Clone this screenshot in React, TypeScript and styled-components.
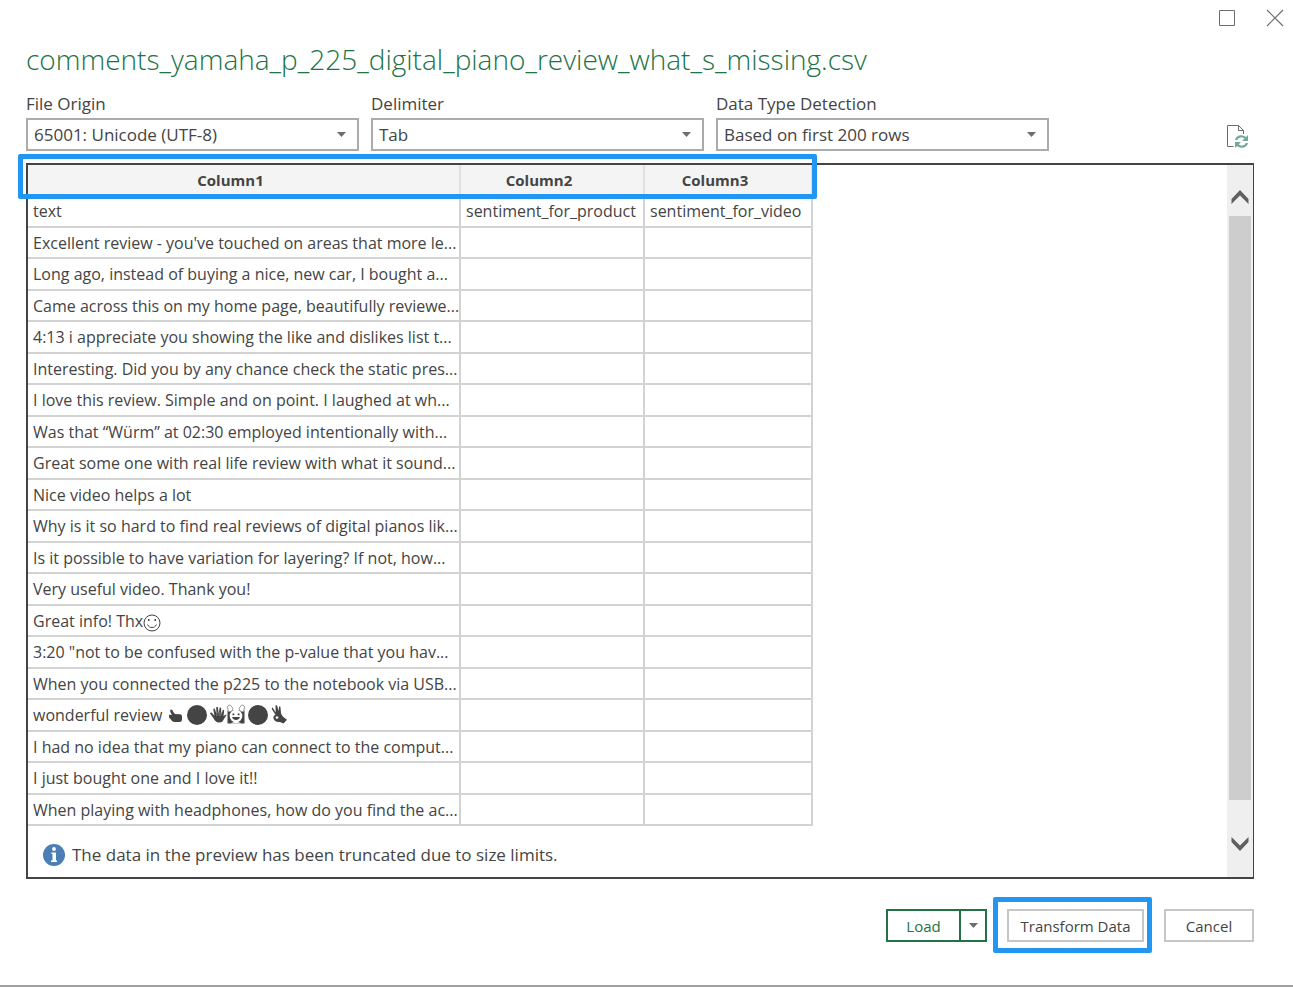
import React from "react";
import styled, { createGlobalStyle } from "styled-components";

const GlobalStyle = createGlobalStyle`
  *, *::before, *::after { box-sizing: border-box; }
  body {
    margin: 0;
    background: #fff;
    color: #444;
    font-family: "Open Sans", "Noto Sans", sans-serif;
    font-size: 17px;
  }
  button, select { font: inherit; color: inherit; }
`;

const Dialog = styled.main`
  display: flex;
  flex-direction: column;
  min-height: 100vh;
  padding: 0 39px 0 26px;
  border-bottom: 2px solid #a0a0a0;
`;

const TitleBar = styled.div`
  display: flex;
  justify-content: flex-end;
  gap: 16px;
  height: 36px;
  margin-right: -37px;
`;

const WindowButton = styled.button`
  width: 32px;
  height: 36px;
  padding: 0;
  border: 0;
  background: none;
  svg { display: block; margin: 0 auto; }
`;

const Title = styled.h1`
  margin: 0;
  color: #217346;
  font-size: 28px;
  font-weight: 300;
  line-height: 46px;
  white-space: nowrap;
`;

const Options = styled.div`
  display: flex;
  align-items: flex-end;
  gap: 12px;
  margin-top: 8px;
`;

const Field = styled.div`
  display: flex;
  flex-direction: column;
  flex: 0 1 333px;
`;

const FieldLabel = styled.label`
  line-height: 28px;
  white-space: nowrap;
`;

const SelectFrame = styled.div`
  display: grid;
  align-items: center;
  height: 33px;
  border: 2px solid #ababab;
  > * { grid-area: 1 / 1; }
  > svg { justify-self: end; margin-right: 11px; pointer-events: none; }
`;

const Select = styled.select`
  width: 100%;
  height: 29px;
  padding: 0 28px 0 6px;
  border: 0;
  background: transparent;
  appearance: none;
`;

const RefreshButton = styled.button`
  margin-left: auto;
  margin-right: 5px;
  padding: 0;
  border: 0;
  background: none;
  svg { display: block; }
`;

const Preview = styled.section`
  display: flex;
  flex: 1;
  margin-top: 12px;
  border: 2px solid #444;
  border-right-width: 1px;
`;

const PreviewBody = styled.div`
  flex: 1;
  min-width: 0;
`;

const TableArea = styled.div`
  position: relative;
  width: fit-content;
`;

const Highlight = styled.div`
  position: absolute;
  border: 5px solid #2196f3;
  border-radius: 2px;
  pointer-events: none;
`;

const HeaderHighlight = styled(Highlight)`
  top: -11px;
  left: -10px;
  right: -4px;
  height: 45px;
`;

const DataTable = styled.table`
  table-layout: fixed;
  width: 785px;
  border-collapse: separate;
  border-spacing: 0;
  font-size: 16px;
`;

const HeadCell = styled.th`
  height: 31px;
  padding: 0 26px 2px 0;
  border-right: 2px solid #e1e1e1;
  background: #f4f4f4;
  font-size: 15px;
  font-weight: 700;
  line-height: 28px;
`;

const Row = styled.tr`
  height: 31px;
  &:nth-child(odd) { height: 32px; }
`;

const Cell = styled.td`
  padding: 0 0 0 5px;
  border-right: 2px solid #d3d3d3;
  border-bottom: 2px solid #d3d3d3;
  line-height: 28px;
  white-space: nowrap;
  overflow: hidden;
`;

const Emoji = styled.svg`
  display: inline-block;
  vertical-align: -5px;
`;

const Notice = styled.p`
  display: flex;
  align-items: center;
  gap: 7px;
  margin: 0;
  padding: 13px 15px 6px;
  line-height: 32px;
`;

const ScrollBar = styled.div`
  display: flex;
  flex-direction: column;
  width: 26px;
  padding: 0 2px;
  background: #efefef;
`;

const ScrollButton = styled.button<{ $tall?: boolean }>`
  height: ${(p) => (p.$tall ? 77 : 51)}px;
  padding: ${(p) => (p.$tall ? 10 : 13)}px 0 0;
  border: 0;
  background: none;
  svg { display: block; margin: 0 auto; }
`;

const ScrollThumb = styled.div`
  flex: 1;
  background: #cdcdcd;
`;

const Footer = styled.footer`
  display: flex;
  justify-content: flex-end;
  gap: 20px;
  padding: 30px 0 43px;
  font-size: 15px;
`;

const Button = styled.button<{ $width: number }>`
  width: ${(p) => p.$width}px;
  height: 33px;
  padding: 0;
  border: 2px solid #c6c6c6;
  background: #fff;
  white-space: nowrap;
`;

const SplitButton = styled.div`
  display: flex;
  border: 2px solid #217346;
`;

const SplitPart = styled.button<{ $width: number }>`
  width: ${(p) => p.$width}px;
  height: 29px;
  padding: 0;
  border: 0;
  background: #fff;
  color: #217346;
  & + & { border-left: 2px solid #217346; }
  svg { display: block; margin: 0 auto; }
`;

const Highlighted = styled.div`
  position: relative;
`;

const ButtonHighlight = styled(Highlight)`
  inset: -12px -8px -11px -14px;
`;

const Caret = () => (
  <svg width="9" height="5" viewBox="0 0 9 5" aria-hidden="true">
    <path d="M0 0h9L4.5 5z" fill="#6d6d6d" />
  </svg>
);

const Smile = () => (
  <Emoji width="18" height="18" viewBox="0 0 18 18" role="img" aria-label="smiling face">
    <circle cx="9" cy="9" r="8" fill="none" stroke="#444" strokeWidth="1" />
    <path d="M4.5 10.5c1.5 4 7.500 4 9 0" fill="none" stroke="#444" strokeWidth="1" />
    <path d="M5 5h1.500v2H5zM11.500 5H13v2h-1.500z" fill="#444" />
  </Emoji>
);

const Reactions = () => (
  <Emoji width="122" height="22" viewBox="0 0 122 22" role="img" aria-label="thumbs up, waving hand, cheering person and OK hand">
    <g fill="#444">
      <path d="M4 5.500c1.300 0 1.700 1.200 2.300 2.400L8 10l5 .3c1.500.3 2 1.200 2 2.400v2.800c0 1.600-.8 2.500-2.300 2.500H7.500c-1.500 0-2.300-.6-3-1.700L2 13.500v-2.700l2.700.2L3.300 7.500C3 6.500 3 5.500 4 5.500z" />
      <circle cx="30" cy="11" r="10" />
      <path d="M44.500 8.500l3 3.200-1.300-7 1.500-.3 1.800 5.600-.3-7h1.600l1 6.800.8-6.300 1.500.2.200 6.800 1.600-4.800 1.300.5-.7 6c1-.7 2-1.500 3-1.300l-2.500 4c-1 2.300-2.500 3.600-4.700 3.600-3 0-4.600-1.500-5.800-4.200L42.800 9z" />
      <circle cx="91" cy="11" r="10" />
      <path d="M105.500 3.200l3.200 5.200-.2-7 1.500-.2 1.700 6 .3-4.700 1.400.2.700 7 1.900 3 4 3-3.500 3.800-3.500-1.600c-3.500.5-6-1-6.500-3.600-.3-1.600.6-3 2-3.500l-3.800-5.800zM109.500 12.300c-1.300.4-1.300 2.400.4 2.600 1.200-.2 1.700-1 1.500-2.100z" fillRule="evenodd" />
      <path d="M60.500 6.500h17v13h-17z" />
    </g>
    <path d="M50 8l-.3 4M52 8l.2 4M54 8l-.5 4" stroke="#8a8a8a" strokeWidth=".7" />
    <circle cx="69" cy="12" r="6.300" fill="#fff" />
    <path d="M61.500 7.500l-1.300-5L63 .8l3 3.500-1.500 3.200zM76.500 7.500l1.300-5L75 .8l-3 3.500 1.500 3.200z" fill="#fff" stroke="#999" strokeWidth="1" />
    <path d="M64 19.500c1-2 9-2 10 0z" fill="#fff" />
    <path d="M65.500 9.500h1.800v1.800h-1.800zM70.700 9.500h1.800v1.800h-1.800zM65 13c1 4 7 4 8 0z" fill="#444" />
  </Emoji>
);

const comments: React.ReactNode[] = [
  "Excellent review - you've touched on areas that more le...",
  "Long ago, instead of buying a nice, new car, I bought a...",
  "Came across this on my home page, beautifully reviewe...",
  "4:13 i appreciate you showing the like and dislikes list t...",
  "Interesting. Did you by any chance check the static pres...",
  "I love this review. Simple and on point. I laughed at wh...",
  "Was that “Würm” at 02:30 employed intentionally with...",
  "Great some one with real life review with what it sound...",
  "Nice video helps a lot",
  "Why is it so hard to find real reviews of digital pianos lik...",
  "Is it possible to have variation for layering? If not, how...",
  "Very useful video. Thank you!",
  <>Great info! Thx<Smile /></>,
  "3:20 \"not to be confused with the p-value that you hav...",
  "When you connected the p225 to the notebook via USB...",
  <>wonderful review <Reactions /></>,
  "I had no idea that my piano can connect to the comput...",
  "I just bought one and I love it!!",
  "When playing with headphones, how do you find the ac...",
];

const fields = [
  { id: "origin", label: "File Origin", value: "65001: Unicode (UTF-8)" },
  { id: "delimiter", label: "Delimiter", value: "Tab" },
  { id: "detection", label: "Data Type Detection", value: "Based on first 200 rows" },
];

export default function App() {
  return (
    <>
      <GlobalStyle />
      <Dialog>
        <TitleBar>
          <WindowButton aria-label="Maximize">
            <svg width="16" height="16" viewBox="0 0 16 16">
              <path d="M.5.5h15v15H.5z" fill="none" stroke="#6d6d6d" />
            </svg>
          </WindowButton>
          <WindowButton aria-label="Close">
            <svg width="18" height="18" viewBox="0 0 18 18">
              <path d="M1 1l16 16M17 1L1 17" fill="none" stroke="#6d6d6d" strokeWidth="1.200" />
            </svg>
          </WindowButton>
        </TitleBar>
        <Title>comments_yamaha_p_225_digital_piano_review_what_s_missing.csv</Title>
        <Options>
          {fields.map((f) => (
            <Field key={f.id}>
              <FieldLabel htmlFor={f.id}>{f.label}</FieldLabel>
              <SelectFrame>
                <Select id={f.id} defaultValue={f.value}>
                  <option>{f.value}</option>
                </Select>
                <Caret />
              </SelectFrame>
            </Field>
          ))}
          <RefreshButton aria-label="Refresh preview">
            <svg width="23" height="28" viewBox="0 0 23 28">
              <path d="M7.500 23.500H1.500V2.500h11l5 5V11M12.500 2.500v5h5" fill="none" stroke="#6d6d6d" strokeWidth="1" />
              <g fill="none" stroke="#74a892" strokeWidth="2.200">
                <path d="M10 17c1.300-4.300 7.300-5 9.800-1.500M21 20c-1.300 4.300-7.300 5-9.800 1.500" />
              </g>
              <path d="M22 12v6h-6zM9 25v-6h6z" fill="#74a892" />
            </svg>
          </RefreshButton>
        </Options>
        <Preview>
          <PreviewBody>
            <TableArea>
              <DataTable>
                <colgroup>
                  <col width="433" />
                  <col width="184" />
                  <col width="168" />
                </colgroup>
                <thead>
                  <tr>
                    <HeadCell>Column1</HeadCell>
                    <HeadCell>Column2</HeadCell>
                    <HeadCell>Column3</HeadCell>
                  </tr>
                </thead>
                <tbody>
                  <Row>
                    <Cell>text</Cell>
                    <Cell>sentiment_for_product</Cell>
                    <Cell>sentiment_for_video</Cell>
                  </Row>
                  {comments.map((c, i) => (
                    <Row key={i}>
                      <Cell>{c}</Cell>
                      <Cell />
                      <Cell />
                    </Row>
                  ))}
                </tbody>
              </DataTable>
              <HeaderHighlight />
            </TableArea>
            <Notice>
              <svg width="22" height="22" viewBox="0 0 22 22" aria-hidden="true">
                <circle cx="11" cy="11" r="11" fill="#4a7eb5" />
                <circle cx="11" cy="5" r="1.900" fill="#fff" />
                <path d="M9 8.500h4V16.500h1V18H8v-1.500h1.500V10H8.500V8.500z" fill="#fff" />
              </svg>
              The data in the preview has been truncated due to size limits.
            </Notice>
          </PreviewBody>
          <ScrollBar>
            <ScrollButton aria-label="Scroll up">
              <svg width="18" height="14" viewBox="0 0 18 14">
                <path d="M.5 9L9 0l8.500 9v5L9 5.500.5 14z" fill="#606060" />
              </svg>
            </ScrollButton>
            <ScrollThumb />
            <ScrollButton $tall aria-label="Scroll down">
              <svg width="18" height="14" viewBox="0 0 18 14">
                <path d="M.5 0L9 8.500 17.500 0v5L9 14 .5 5z" fill="#606060" />
              </svg>
            </ScrollButton>
          </ScrollBar>
        </Preview>
        <Footer>
          <SplitButton>
            <SplitPart $width={71}>Load</SplitPart>
            <SplitPart $width={26} aria-label="Load options"><Caret /></SplitPart>
          </SplitButton>
          <Highlighted>
            <Button $width={137}>Transform Data</Button>
            <ButtonHighlight />
          </Highlighted>
          <Button $width={90}>Cancel</Button>
        </Footer>
      </Dialog>
    </>
  );
}
